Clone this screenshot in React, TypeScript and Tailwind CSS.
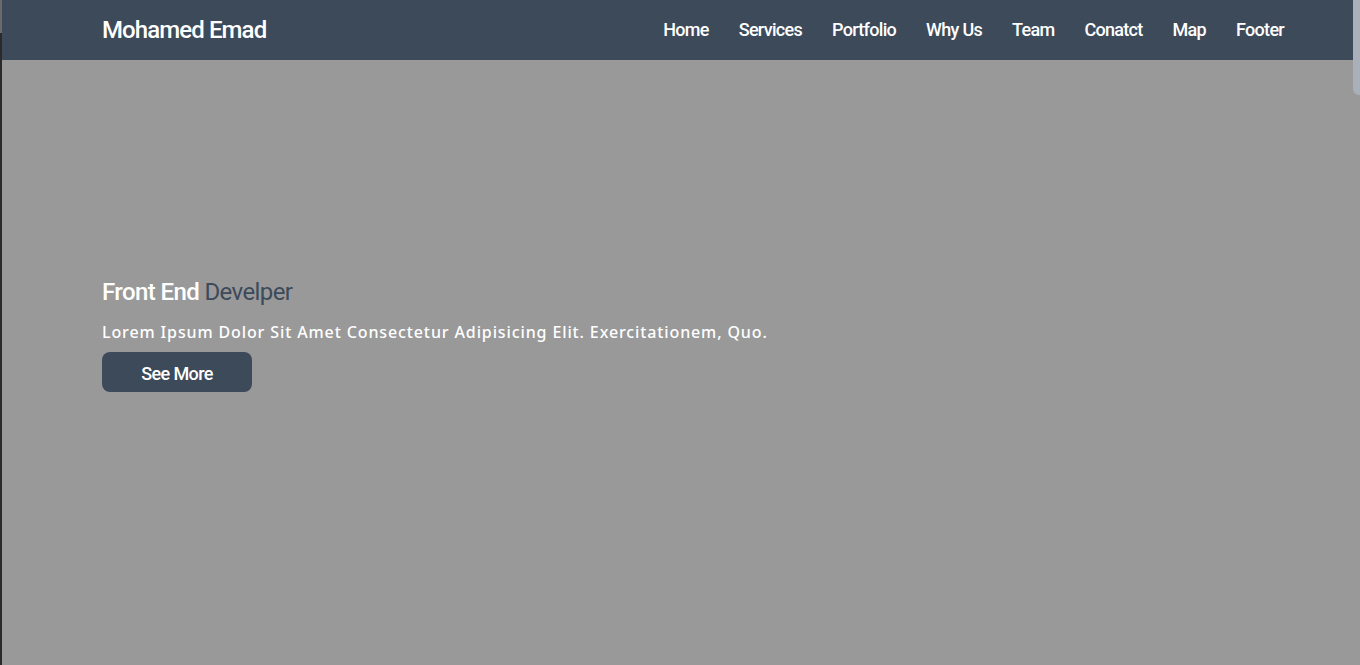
import React from "react";

export default function App() {
  const links = ["Home", "Services", "Portfolio", "Why Us", "Team", "Conatct", "Map", "Footer"];
  return (
    <div className="flex h-[665px] w-[1360px] overflow-hidden bg-[#999999]" style={{ fontFamily: "Roboto, 'Noto Sans', sans-serif" }}>
      <div className="flex w-[2px] flex-col">
        <div className="h-[33px] bg-[#6b6b6b]" />
        <div className="flex-1 bg-[#2a2a2a]" />
      </div>
      <div className="flex flex-1 flex-col">
        <header className="flex h-[60px] items-center justify-between bg-[#3d4a5a] pl-[100px] pr-[69px]">
          <div className="text-[24px] font-medium tracking-[-0.9px] text-white">Mohamed Emad</div>
          <nav className="flex items-center gap-[30px] pb-[2px]">
            {links.map((l) => (
              <a key={l} className="text-[18px] font-medium tracking-[-0.7px] text-white">{l}</a>
            ))}
          </nav>
        </header>
        <main className="flex flex-1 flex-col items-start pl-[100px] pt-[214px]">
          <h1 className="text-[24px] leading-[36px] font-medium tracking-[-0.6px] text-white">
            Front End <span className="font-normal text-[#3d4a5a]">Develper</span>
          </h1>
          <p className="mt-[10px] text-[16px] leading-[24px] font-medium tracking-[0.88px] text-white" style={{ fontFamily: "'Noto Sans', sans-serif" }}>
            Lorem Ipsum Dolor Sit Amet Consectetur Adipisicing Elit. Exercitationem, Quo.
          </p>
          <button className="mt-[8px] h-[40px] w-[150px] rounded-[8px] bg-[#3d4a5a] pt-[3px] text-[18px] font-medium tracking-[-0.6px] text-white">
            See More
          </button>
        </main>
      </div>
      <div className="flex w-[7px] flex-col bg-[#999999]">
        <div className="h-[95px] rounded-bl-[6px] bg-[#a9b0b9]" />
      </div>
    </div>
  );
}
